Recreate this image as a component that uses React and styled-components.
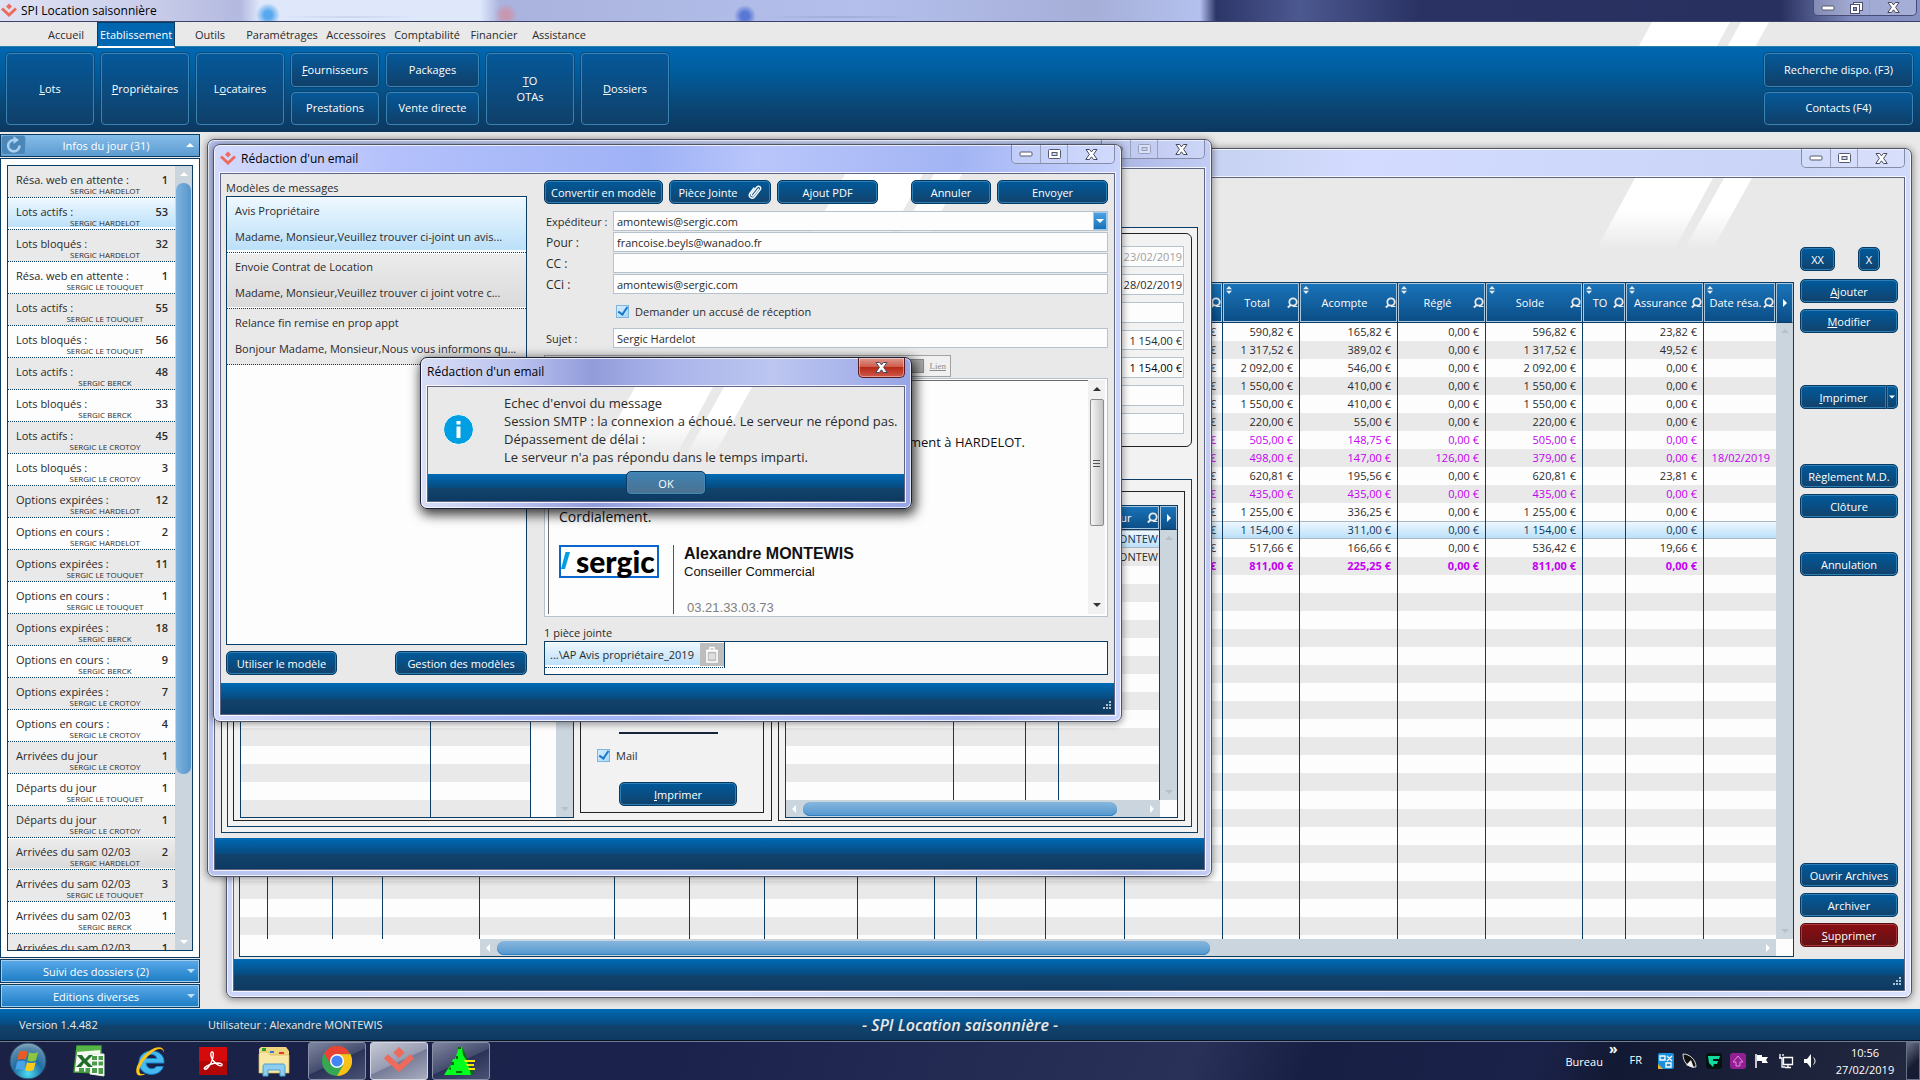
import React from 'react';
import styled, { createGlobalStyle, css } from 'styled-components';

const navy = '#0b3c64';
const sans = `'Open Sans', 'Noto Sans', sans-serif`;

const infos = [
	['Résa. web en attente :', 'SERGIC HARDELOT', 1],
	['Lots actifs :', 'SERGIC HARDELOT', 53, 'selected'],
	['Lots bloqués :', 'SERGIC HARDELOT', 32],
	['Résa. web en attente :', 'SERGIC LE TOUQUET', 1],
	['Lots actifs :', 'SERGIC LE TOUQUET', 55],
	['Lots bloqués :', 'SERGIC LE TOUQUET', 56],
	['Lots actifs :', 'SERGIC BERCK', 48],
	['Lots bloqués :', 'SERGIC BERCK', 33],
	['Lots actifs :', 'SERGIC LE CROTOY', 45],
	['Lots bloqués :', 'SERGIC LE CROTOY', 3],
	['Options expirées :', 'SERGIC HARDELOT', 12],
	['Options en cours :', 'SERGIC HARDELOT', 2],
	['Options expirées :', 'SERGIC LE TOUQUET', 11],
	['Options en cours :', 'SERGIC LE TOUQUET', 1],
	['Options expirées :', 'SERGIC BERCK', 18],
	['Options en cours :', 'SERGIC BERCK', 9],
	['Options expirées :', 'SERGIC LE CROTOY', 7],
	['Options en cours :', 'SERGIC LE CROTOY', 4],
	['Arrivées du jour', 'SERGIC LE CROTOY', 1],
	['Départs du jour', 'SERGIC LE TOUQUET', 1],
	['Départs du jour', 'SERGIC LE CROTOY', 1],
	['Arrivées du sam 02/03', 'SERGIC HARDELOT', 2, 'hover'],
	['Arrivées du sam 02/03', 'SERGIC LE TOUQUET', 3],
	['Arrivées du sam 02/03', 'SERGIC BERCK', 1],
	['Arrivées du sam 02/03', '', 1],
];

const bookingColumns = [
	{ width: 28 },
	{ width: 65 },
	{ width: 50 },
	{ width: 97 },
	{},
	{ width: 75 },
	{ width: 75 },
	{ width: 93 },
	{ width: 77 },
	{ width: 42 },
	{ width: 69 },
	{ width: 79 },
	{ width: 98, search: true },
	{ width: 77, label: 'Total', search: true },
	{ width: 98, label: 'Acompte', search: true },
	{ width: 88, label: 'Réglé', search: true },
	{ width: 97, label: 'Solde', search: true },
	{ width: 43, label: 'TO', search: true },
	{ width: 78, label: 'Assurance', search: true },
	{ width: 72, label: 'Date résa.', search: true, last: true },
];

const booking = (total, deposit, paid, due, insurance, options = {}) => ({
	cells: [...Array(12).fill(''), '€', `${total} €`, `${deposit} €`, `${paid} €`, `${due} €`, '', `${insurance} €`, options.date || ''],
	...options,
});

const bookings = [
	booking('590,82', '165,82', '0,00', '596,82', '23,82'),
	booking('1 317,52', '389,02', '0,00', '1 317,52', '49,52'),
	booking('2 092,00', '546,00', '0,00', '2 092,00', '0,00'),
	booking('1 550,00', '410,00', '0,00', '1 550,00', '0,00'),
	booking('1 550,00', '410,00', '0,00', '1 550,00', '0,00'),
	booking('220,00', '55,00', '0,00', '220,00', '0,00'),
	booking('505,00', '148,75', '0,00', '505,00', '0,00', { pink: true }),
	booking('498,00', '147,00', '126,00', '379,00', '0,00', { pink: true, date: '18/02/2019' }),
	booking('620,81', '195,56', '0,00', '620,81', '23,81'),
	booking('435,00', '435,00', '0,00', '435,00', '0,00', { pink: true }),
	booking('1 255,00', '336,25', '0,00', '1 255,00', '0,00'),
	booking('1 154,00', '311,00', '0,00', '1 154,00', '0,00', { selected: true }),
	booking('517,66', '166,66', '0,00', '536,42', '19,66'),
	booking('811,00', '225,25', '0,00', '811,00', '0,00', { pink: true, bold: true }),
];

const authorColumns = [{}, { width: 72 }, { width: 33 }, { width: 101, label: 'Utilisateur', search: true, tight: true }];
const authors = [
	{ cells: ['', '', '', 'A. MONTEW'], selected: true },
	{ cells: ['', '', '', 'A. MONTEW'] },
];

const models = [
	['Avis Propriétaire', 'Madame, Monsieur,Veuillez trouver ci-joint un avis...', 'selected'],
	['Envoie Contrat de Location', 'Madame, Monsieur,Veuillez trouver ci joint votre c...', 'hover'],
	['Relance fin remise en prop appt', 'Bonjour Madame, Monsieur,Nous vous informons qu...'],
];

/* ---------- drawings ---------- */

const SpiLogo = ({ size = 16 }) => (
	<svg width={size} height={size} viewBox="0 0 32 32" aria-hidden="true">
		<path d="M16 1l6 6-6 6-6-6z" fill="#ee6a5b" />
		<path d="M2 11l14 13 14-13" fill="none" stroke="#ee6a5b" strokeWidth="6" />
	</svg>
);

const Magnifier = () => (
	<svg width="11" height="12" viewBox="0 0 11 12" aria-hidden="true">
		<circle cx="6" cy="5" r="3.7" fill="none" stroke="#e9e9e9" strokeWidth="1.8" />
		<path d="M3.600 8L0.800 10.500" stroke="#e9e9e9" strokeWidth="2" />
		<path d="M6 9.500h4.500" stroke="#e9e9e9" strokeWidth="1" />
	</svg>
);

const SortIcon = () => (
	<svg width="6" height="8" viewBox="0 0 6 8" aria-hidden="true">
		<path d="M0 3.2L3 0l3 3.2zM0 4.8h6L3 8z" fill="#e9e9e9" />
	</svg>
);

const Triangle = ({ dir = 'down', color = '#fff', size = 8 }) => {
	const d = {
		down: 'M0 2h8L4 6z',
		up: 'M0 6h8L4 2z',
		left: 'M6 0v8L2 4z',
		right: 'M2 0v8l4-4z',
	}[dir];
	return (
		<svg width={size} height={size} viewBox="0 0 8 8" aria-hidden="true">
			<path d={d} fill={color} />
		</svg>
	);
};

const Streaks = ({ height = 72 }) => (
	<svg width="156" height={height} viewBox={`0 0 156 ${height}`} aria-hidden="true">
		<defs>
			<linearGradient id={`fade${height}`} x1="0" y1="0" x2="0" y2="72" gradientUnits="userSpaceOnUse">
				<stop offset="0.45" stopColor="#fff" />
				<stop offset="1" stopColor="#fff" stopOpacity="0" />
			</linearGradient>
		</defs>
		<path d="M39 0h78L78 72H0zM128 0h28l-40 72H88z" fill={`url(#fade${height})`} />
	</svg>
);

const Grip = () => (
	<svg width="10" height="10" viewBox="0 0 10 10" aria-hidden="true">
		<path d="M8 0h2v2H8zM5 3h2v2H5zM8 3h2v2H8zM2 6h2v2H2zM5 6h2v2H5zM8 6h2v2H8z" fill="#a9bfd2" />
	</svg>
);

const MinIcon = () => (
	<svg width="14" height="6" viewBox="0 0 14 6" aria-hidden="true">
		<rect x="1" y="1" width="12" height="4" rx="1" fill="#fff" stroke="#555a6c" />
	</svg>
);

const MaxIcon = ({ dim }) => (
	<svg width="13" height="10" viewBox="0 0 13 10" opacity={dim ? 0.4 : 1} aria-hidden="true">
		<rect x="0.5" y="0.5" width="12" height="9" rx="1" fill="#fff" stroke="#555a6c" />
		<rect x="4" y="3.5" width="5" height="3" fill="#cfd8f6" stroke="#555a6c" />
	</svg>
);

const RestoreIcon = () => (
	<svg width="13" height="12" viewBox="0 0 13 12" aria-hidden="true">
		<rect x="3.5" y="0.5" width="9" height="8" fill="#fff" stroke="#4b5070" />
		<rect x="0.5" y="2.5" width="9" height="9" fill="#fff" stroke="#4b5070" />
		<rect x="3.5" y="5.5" width="3" height="3" fill="#8791c4" stroke="#4b5070" />
	</svg>
);

const CloseIcon = () => (
	<svg width="13" height="11" viewBox="0 0 13 11" aria-hidden="true">
		<path d="M1 .5h3.6l1.9 2.4L8.400 .5H12L8.600 5.300 12.200 10.500H8.500l-2-2.700-2 2.700H.8L4.400 5.300z" fill="#fff" stroke="#454a5c" />
	</svg>
);

const Clip = () => (
	<svg width="14" height="16" viewBox="0 0 14 16" aria-hidden="true">
		<path d="M10.500 5L5.500 11.500c-1 1.300-3-.1-2-1.500l5.200-6.800c1.800-2.300 5.300 0 3.600 2.500L7 12.700c-2.600 3.400-7.500.2-5-3.500L6 4" fill="none" stroke="#fff" strokeWidth="1.400" strokeLinecap="round" />
	</svg>
);

const Trash = () => (
	<svg width="14" height="18" viewBox="0 0 14 18" aria-hidden="true">
		<path d="M1 4.500h12M5 4V1.500h4V4M2 5v11h10V5z" fill="none" stroke="#fff" strokeWidth="1.500" />
		<path d="M5 7.500v6M7 7.500v6M9 7.500v6" stroke="#fff" />
	</svg>
);

const InfoIcon = () => (
	<svg width="31" height="31" viewBox="0 0 31 31" aria-hidden="true">
		<circle cx="15.500" cy="15.500" r="15" fill="#009fe3" stroke="#f4f8fb" />
		<path d="M13.500 7h4v3.500h-4zM13.500 12.500h4V24h-4z" fill="#fff" />
	</svg>
);

const Refresh = () => (
	<svg width="16" height="18" viewBox="0 0 16 18" aria-hidden="true">
		<path d="M13.500 9.500A5.700 5.700 0 1 1 8 4" fill="none" stroke="#a9d0f0" strokeWidth="2.600" />
		<path d="M7.500 0l5.500 4-5.500 4z" fill="#a9d0f0" />
	</svg>
);

const StartOrb = () => (
	<svg width="38" height="38" viewBox="0 0 38 38" aria-hidden="true">
		<defs>
			<radialGradient id="orb" cx="0.5" cy="0.85" r="0.9">
				<stop offset="0" stopColor="#4fdcf5" />
				<stop offset="0.45" stopColor="#1f6fa5" />
				<stop offset="0.8" stopColor="#5d8cab" />
				<stop offset="1" stopColor="#9fb9c9" />
			</radialGradient>
		</defs>
		<circle cx="19" cy="19" r="18" fill="url(#orb)" stroke="#24435f" />
		<path d="M10 10c3-1.800 5.500-1.700 8.500-.3l-1.700 8.300c-3-1.300-5.600-1.300-8.500.4z" fill="#ea5a24" />
		<path d="M20 10.300c3 1.300 6 1.300 9-.3l-2 8.300c-2.800 1.500-5.500 1.500-8.600.3z" fill="#8cc63f" />
		<path d="M8 19.800c3-1.600 5.400-1.600 8.500-.3l-1.800 8.300c-3-1.300-5.500-1.200-8.300.2z" fill="#4aa3e8" />
		<path d="M18 20.200c3 1.300 5.800 1.200 8.700-.3l-2 8.200c-2.800 1.500-5.500 1.400-8.500.2z" fill="#fbc91b" />
	</svg>
);

const ExcelIcon = () => (
	<svg width="32" height="32" viewBox="0 0 32 32" aria-hidden="true">
		<path d="M4 1h24v27L1 27z" fill="#f5fbf2" stroke="#3f9a32" strokeWidth="1.500" />
		<path d="M4 1h24v4L3 7z" fill="#58b548" />
		<path d="M17 9h14v22l-14-2z" fill="#fff" stroke="#d9e8d4" />
		<path d="M19 11h5v4h-5zM25.500 11H30v4h-4.500zM19 16.500h5v4h-5zM25.500 16.500H30v4h-4.500zM6 23h5v4H6zM12.500 23H17v4h-4.500zM19 23h5v5h-5zM25.500 23H30v6h-4.500z" fill="#4a9c4a" />
		<path d="M4 10h5l3 4 4-4h4l-6 6 6 6h-5l-4-4-3 4H3l6-6z" fill="#216b2b" />
	</svg>
);

const IeIcon = () => (
	<svg width="32" height="32" viewBox="0 0 32 32" aria-hidden="true">
		<path d="M29 18H11c.4 6.500 8 7.500 10.300 3.500h6.900C25 33 4 32 4 17.500 4 2 30 2 29 18zM11.300 13.500h10.500C21 8 12.300 8 11.300 13.500z" fill="#45b9f0" stroke="#1b84cc" />
		<path d="M29 8C29.500 0 20 1 13 7 5 13.500-1 24 2 29c2 3 7 1 9-.5-3 1-6 1-6.500-1.500C3.500 22 10 13 16 8.500 21 4 28 1.500 29 8z" fill="#fbc417" />
	</svg>
);

const PdfIcon = () => (
	<svg width="28" height="28" viewBox="0 0 28 28" aria-hidden="true">
		<rect width="28" height="28" fill="#d50a0a" />
		<path d="M0 14h28v14H0z" fill="#b30606" />
		<path d="M12.500 5c3-1 2 6-.5 11-2 4-5 7-6.500 6-1.500-1.500 5-5 10-5.800 4-.7 8 .3 7.500 2-.8 2-6-1-8.500-4.200C12 11 11 6 12.500 5z" fill="none" stroke="#fff" strokeWidth="1.400" />
	</svg>
);

const FolderIcon = () => (
	<svg width="32" height="31" viewBox="0 0 32 31" aria-hidden="true">
		<path d="M1 3l2-2h25l3 4v22H1z" fill="#f0d581" />
		<path d="M4 2h4v3H4z" fill="#2aa12a" />
		<path d="M3 6h7l2 3h19v18H1V8z" fill="#f8e7a5" stroke="#d8b75a" strokeWidth="0.700" />
		<path d="M12 5h4v2h-4z" fill="#2a7ed8" />
		<path d="M21 6h5v2h-5z" fill="#d93b28" />
		<path d="M5 30V20c0-1 1-2 2-2h18c1 0 2 1 2 2v10h-5v-6H10v6z" fill="#8ccdf0" stroke="#4a9fcf" />
	</svg>
);

const ChromeIcon = () => (
	<svg width="30" height="30" viewBox="0 0 30 30" aria-hidden="true">
		<circle cx="15" cy="15" r="15" fill="#34a853" />
		<path d="M2 7.500A15 15 0 0 1 28 7.500L15 9l-6.500 9z" fill="#ea4335" />
		<path d="M28 7.500A15 15 0 0 1 15 30l6.300-11L15 8.200h13z" fill="#fbc116" />
		<circle cx="15" cy="15" r="7" fill="#fff" />
		<circle cx="15" cy="15" r="5.600" fill="#4285f4" />
	</svg>
);

const TreeIcon = () => (
	<svg width="34" height="30" viewBox="0 0 34 30" aria-hidden="true">
		<path d="M15 1l3 0 12 27h-6z" fill="#0a6b0a" />
		<path d="M15 1h3l1 8 4 6 2 7 2 7H0l5-8h1l3-8h2l2-6z" fill="#00ff1e" />
		<path d="M7 16h3v3H7zM4 23l3-2v3zM12 25h6v2h-6zM14 1h3v2h-3zM12 10h2v3h-2z" fill="#0a6b0a" />
		<path d="M20 14h11v2H21zM22 18h8v2h-7zM24 22h7v2h-6z" fill="#ffe800" />
	</svg>
);

const trayIcons = [
	<svg key="px" width="16" height="16" viewBox="0 0 16 16">
		<rect width="16" height="16" rx="2" fill="#1b8fd8" />
		<path d="M2 3h5v4H2zM9 3l5 5M14 3L9 8M8 10h5v4H8z" stroke="#fff" fill="none" strokeWidth="1.300" />
		<path d="M0 11l5 5H0z" fill="#e8b13a" />
	</svg>,
	<svg key="dish" width="16" height="16" viewBox="0 0 16 16">
		<path d="M1 1c7 0 13 6 13 13C6 15 1 9 1 1z" fill="#111" stroke="#ddd" />
		<path d="M4 12l5-5 3 8z" fill="#eee" />
	</svg>,
	<svg key="shield" width="16" height="16" viewBox="0 0 16 16">
		<rect width="16" height="16" rx="3" fill="#06120f" />
		<path d="M2 3h12l-1 3H7v2h5l-1 3H8l-1 3-4-4z" fill="#10dba0" />
	</svg>,
	<svg key="up" width="16" height="16" viewBox="0 0 16 16">
		<rect width="16" height="16" rx="3" fill="#922092" />
		<path d="M8 3l5 6h-3v4H6V9H3z" fill="none" stroke="#e58be0" />
	</svg>,
	<svg key="flag" width="16" height="16" viewBox="0 0 16 16">
		<path d="M2 1v14" stroke="#fff" strokeWidth="1.500" />
		<path d="M3 2h5v2h6l-2 3 2 3H8V8H3z" fill="#fff" />
	</svg>,
	<svg key="net" width="16" height="16" viewBox="0 0 16 16">
		<path d="M5.500 4.500h9v7h-9zM7 14.500h6M10 12v2M2 1v4M5 1v2M1 5h3v9h3" fill="none" stroke="#fff" strokeWidth="1.300" />
	</svg>,
	<svg key="sound" width="16" height="16" viewBox="0 0 16 16">
		<path d="M2 6h3l4-5v14l-4-5H2z" fill="#fff" />
		<path d="M11.500 4.500c2 2 2 5 0 7" fill="none" stroke="#fff" />
	</svg>,
];

/* ---------- shared parts ---------- */

function ScrollBar({ vertical, dim, start = 0, end = 0 }) {
	const color = dim ? '#b4c0cc' : '#fff';
	return (
		<Track $vertical={vertical}>
			<Triangle dir={vertical ? 'up' : 'left'} color={color} />
			{dim ? <Spacer /> : <Thumb $vertical={vertical} $start={start} $end={end} />}
			<Triangle dir={vertical ? 'down' : 'right'} color={color} />
		</Track>
	);
}

function DataGrid({ columns, rows, count, head }) {
	return (
		<Table>
			<colgroup>
				{columns.map((c, i) => (
					<Col key={i} $w={c.width} />
				))}
			</colgroup>
			<thead>
				<tr>
					{columns.map((c, i) => (
						<Th key={i} $h={head}>
							{head > 30 && (
								<SortMark>
									<SortIcon />
								</SortMark>
							)}
							{c.label}
							{c.search && (
								<SearchMark>
									<Magnifier />
								</SearchMark>
							)}
						</Th>
					))}
				</tr>
			</thead>
			<tbody>
				{Array.from({ length: count }, (_, r) => {
					const row = rows[r] || { cells: [] };
					return (
						<Tr key={r} $pink={row.pink} $bold={row.bold} $selected={row.selected}>
							{columns.map((c, i) => (
								<Td key={i} $last={c.last} $tight={c.tight}>
									{row.cells[i]}
								</Td>
							))}
						</Tr>
					);
				})}
			</tbody>
		</Table>
	);
}

function WindowFrame({ title, logo, controls, children, glass, strong, as: Place }) {
	return (
		<Place>
			<Frame $glass={glass} $strong={strong}>
				<TitleBar>
					{logo && <SpiLogo />}
					<TitleText>{title}</TitleText>
					{controls}
				</TitleBar>
				<Client>{children}</Client>
			</Frame>
		</Place>
	);
}

const WindowControls = ({ dim }) => (
	<Controls>
		<ControlButton $w={28} aria-label="Réduire">
			<MinIcon />
		</ControlButton>
		<ControlButton $w={27} aria-label="Agrandir">
			<MaxIcon dim={dim} />
		</ControlButton>
		<ControlButton $w={47} aria-label="Fermer">
			<CloseIcon />
		</ControlButton>
	</Controls>
);

/* ---------- windows ---------- */

function BookingsWindow() {
	return (
		<WindowFrame as={BookingsPlace} glass="linear-gradient(100deg, #c9d3f6, #d5deff 30%, #c8d2f2 55%, #d3dcfe 62%, #c9d4f6 85%, #dbe2ff)" controls={<WindowControls />}>
			<StreakLayer $right={152}>
				<Streaks />
			</StreakLayer>
			<BookingsBody>
				<BookingsGrid>
					<GridRow>
						<GridClip>
							<DataGrid columns={bookingColumns} rows={bookings} count={35} head={40} />
						</GridClip>
						<GridSide>
							<HeadMore $h={40} aria-label="Colonnes suivantes">
								<Triangle dir="right" />
							</HeadMore>
							<ScrollBar vertical dim />
						</GridSide>
					</GridRow>
					<GridBottom $indent={240}>
						<ScrollBar start={1} end={550} />
					</GridBottom>
				</BookingsGrid>
				<Actions>
					<SmallActions>
						<Button $w={35}>XX</Button>
						<Button $w={22}>X</Button>
					</SmallActions>
					<Button $mt={8}>
						<span><u>A</u>jouter</span>
					</Button>
					<Button $mt={6}>
						<span><u>M</u>odifier</span>
					</Button>
					<SplitRow>
						<Button $grow $split>
							<span><u>I</u>mprimer</span>
						</Button>
						<SplitArrow aria-label="Options d'impression">
							<Triangle size={6} />
						</SplitArrow>
					</SplitRow>
					<Button $mt={55}>Règlement M.D.</Button>
					<Button $mt={6}>Clôture</Button>
					<Button $mt={34}>Annulation</Button>
					<Spacer />
					<Button>Ouvrir Archives</Button>
					<Button $mt={6}>Archiver</Button>
					<Button $mt={6} $danger>
						<span><u>S</u>upprimer</span>
					</Button>
				</Actions>
			</BookingsBody>
			<BlueBar>
				<Grip />
			</BlueBar>
		</WindowFrame>
	);
}

function DetailWindow() {
	return (
		<WindowFrame as={DetailPlace} glass="linear-gradient(90deg, #b9c4ee, #cdd7fb 70%, #aebae6 92%, #c3cdf6)" controls={<WindowControls dim />}>
			<DetailBody>
				<Panel>
					<DatesGroup>
						<Dates>
							<AmountField $muted aria-label="Date de création" defaultValue="23/02/2019" />
							<AmountField aria-label="Date limite" defaultValue="28/02/2019" />
							<AmountField aria-label="Référence" />
							<AmountField aria-label="Montant" defaultValue="1 154,00 €" />
							<AmountField $strong aria-label="Solde" defaultValue="1 154,00 €" />
							<AmountField aria-label="Remise" />
							<AmountField aria-label="Commission" />
						</Dates>
					</DatesGroup>
					<LowerPanel>
						<LeftGroup>
							<SmallGrid>
								<GridRow>
									<GridClip>
										<DataGrid columns={[{}, { width: 100 }]} rows={[]} count={16} head={24} />
									</GridClip>
									<GridGap />
									<GridSide>
										<HeadMore $h={24} aria-label="Suite">
											<Triangle dir="right" />
										</HeadMore>
										<ScrollBar vertical dim />
									</GridSide>
								</GridRow>
							</SmallGrid>
							<PrintGroup>
								<Rule />
								<CheckLabel>
									<Check type="checkbox" defaultChecked />
									Mail
								</CheckLabel>
								<PrintButton>
									<span><u>I</u>mprimer</span>
								</PrintButton>
							</PrintGroup>
						</LeftGroup>
						<RightGroup>
							<AuthorGrid>
								<GridRow>
									<GridClip>
										<DataGrid columns={authorColumns} rows={authors} count={16} head={24} />
									</GridClip>
									<GridSide>
										<HeadMore $h={24} aria-label="Colonnes suivantes">
											<Triangle dir="right" />
										</HeadMore>
										<ScrollBar vertical dim />
									</GridSide>
								</GridRow>
								<GridBottom>
									<ScrollBar start={1} end={27} />
								</GridBottom>
							</AuthorGrid>
						</RightGroup>
					</LowerPanel>
				</Panel>
			</DetailBody>
			<BlueBar />
		</WindowFrame>
	);
}

function EmailWindow() {
	return (
		<WindowFrame as={EmailPlace} title="Rédaction d'un email" logo glass="linear-gradient(90deg, #d3dafc, #b3c0fb 20%, #9fb2f6 48%, #b9c6fb 60%, #a3b4f4 82%, #c9d4fb)" controls={<WindowControls />}>
			<StreakLayer $right={152}>
				<Streaks height={58} />
			</StreakLayer>
			<EmailBody>
				<ModelsColumn>
					<Caption>Modèles de messages</Caption>
					<ModelList>
						{models.map(([name, text, state]) => (
							<ModelItem key={name} $state={state}>
								<span>{name}</span>
								<span>{text}</span>
							</ModelItem>
						))}
					</ModelList>
					<ModelButtons>
						<Button $w={111}>Utiliser le modèle</Button>
						<Button $w={132}>Gestion des modèles</Button>
					</ModelButtons>
				</ModelsColumn>
				<MailColumn>
					<MailButtons>
						<Button $w={119}>Convertir en modèle</Button>
						<Button $w={102}>
							<WithIcon>
								Pièce Jointe
								<Clip />
							</WithIcon>
						</Button>
						<Button $w={101}>Ajout PDF</Button>
						<Spacer />
						<Button $w={80}>Annuler</Button>
						<Button $w={111}>Envoyer</Button>
					</MailButtons>
					<Fields>
						<label htmlFor="from">Expéditeur :</label>
						<SelectWrap>
							<Select id="from">
								<option>amontewis@sergic.com</option>
							</Select>
							<SelectArrow>
								<Triangle />
							</SelectArrow>
						</SelectWrap>
						<BigLabel htmlFor="to">Pour :</BigLabel>
						<Input id="to" defaultValue="francoise.beyls@wanadoo.fr" />
						<BigLabel htmlFor="cc">CC :</BigLabel>
						<Input id="cc" />
						<BigLabel htmlFor="cci">CCi :</BigLabel>
						<Input id="cci" defaultValue="amontewis@sergic.com" />
					</Fields>
					<ReceiptRow>
						<Check type="checkbox" defaultChecked />
						Demander un accusé de réception
					</ReceiptRow>
					<Fields>
						<label htmlFor="subject">Sujet :</label>
						<Input id="subject" defaultValue="Sergic Hardelot" />
					</Fields>
					<EditorTools>
						<ImageTool aria-label="Image" />
						<LinkTool>Lien</LinkTool>
					</EditorTools>
					<Editor>
						<Page>
							<Sentence>ment à HARDELOT.</Sentence>
							<Closing>Cordialement.</Closing>
							<Signature>
								<SergicLogo>
									<svg width="9" height="17" viewBox="0 0 9 17" aria-hidden="true">
										<path d="M4.500 0H9L4 17H0z" fill="#00a0e0" />
									</svg>
									sergic
								</SergicLogo>
								<Contact>
									<ContactName>Alexandre MONTEWIS</ContactName>
									<ContactRole>Conseiller Commercial</ContactRole>
									<ContactPhone>03.21.33.03.73</ContactPhone>
								</Contact>
							</Signature>
						</Page>
						<EditorScroll>
							<Triangle dir="up" color="#333" />
							<EditorThumb />
							<Spacer />
							<Triangle color="#333" />
						</EditorScroll>
					</Editor>
					<AttachCaption>1 pièce jointe</AttachCaption>
					<Attachments>
						<Attachment>
							<span>...\AP Avis propriétaire_2019</span>
							<TrashButton aria-label="Supprimer la pièce jointe">
								<Trash />
							</TrashButton>
						</Attachment>
					</Attachments>
				</MailColumn>
			</EmailBody>
			<BlueBar>
				<Grip />
			</BlueBar>
		</WindowFrame>
	);
}

function ErrorDialog() {
	return (
		<WindowFrame
			as={DialogPlace}
			title="Rédaction d'un email"
			strong
			glass="linear-gradient(90deg, #d9def6, #b9c1ee 20%, #929cda 35%, #aab4ea 50%, #bcc6f0 72%, #98a5e6)"
			controls={
				<RedClose aria-label="Fermer">
					<CloseIcon />
				</RedClose>
			}
		>
			<StreakLayer $right={152}>
				<Streaks height={70} />
			</StreakLayer>
			<DialogBody>
				<InfoIcon />
				<Message>
					Echec d'envoi du message
					<br />
					Session SMTP : la connexion a échoué. Le serveur ne répond pas.
					<br />
					Dépassement de délai :
					<br />
					Le serveur n'a pas répondu dans le temps imparti.
				</Message>
			</DialogBody>
			<DialogBar>
				<OkButton>OK</OkButton>
			</DialogBar>
		</WindowFrame>
	);
}

export default function App() {
	return (
		<Screen>
			<GlobalStyle />
			<MainTitle>
				<SpiLogo />
				<MainTitleText>SPI Location saisonnière</MainTitleText>
				<MainControls>
					<ControlButton $w={28} aria-label="Réduire">
						<MinIcon />
					</ControlButton>
					<ControlButton $w={27} aria-label="Restaurer">
						<RestoreIcon />
					</ControlButton>
					<ControlButton $w={47} aria-label="Fermer">
						<CloseIcon />
					</ControlButton>
				</MainControls>
			</MainTitle>
			<MenuBar>
				<StreakLayer $right={151}>
					<Streaks height={24} />
				</StreakLayer>
				<MenuItem $w={62}>Accueil</MenuItem>
				<MenuItem $w={78} $active>Etablissement</MenuItem>
				<MenuItem $w={70}>Outils</MenuItem>
				<MenuItem $w={74}>Paramétrages</MenuItem>
				<MenuItem $w={74}>Accessoires</MenuItem>
				<MenuItem $w={68}>Comptabilité</MenuItem>
				<MenuItem $w={66}>Financier</MenuItem>
				<MenuItem $w={64}>Assistance</MenuItem>
			</MenuBar>
			<Ribbon>
				<RibbonButton $w={88}><span><u>L</u>ots</span></RibbonButton>
				<RibbonButton $w={88}><span><u>P</u>ropriétaires</span></RibbonButton>
				<RibbonButton $w={88}><span>L<u>o</u>cataires</span></RibbonButton>
				<RibbonStack $w={88}>
					<RibbonButton><span><u>F</u>ournisseurs</span></RibbonButton>
					<RibbonButton>Prestations</RibbonButton>
				</RibbonStack>
				<RibbonStack $w={93}>
					<RibbonButton>Packages</RibbonButton>
					<RibbonButton>Vente directe</RibbonButton>
				</RibbonStack>
				<RibbonButton $w={88}>
					<span>
						<u>T</u>O
						<br />
						OTAs
					</span>
				</RibbonButton>
				<RibbonButton $w={88}><span><u>D</u>ossiers</span></RibbonButton>
				<Spacer />
				<RibbonStack $w={149}>
					<RibbonButton>Recherche dispo. (F3)</RibbonButton>
					<RibbonButton>Contacts (F4)</RibbonButton>
				</RibbonStack>
			</Ribbon>
			<Workspace>
				<Sidebar>
					<SideHead>
						<RefreshButton aria-label="Actualiser">
							<Refresh />
						</RefreshButton>
						<SideTitle>Infos du jour (31)</SideTitle>
						<Triangle dir="up" />
					</SideHead>
					<SidePanel>
						<InfoBox>
							<InfoList>
								{infos.map(([label, place, n, state], i) => (
									<InfoItem key={i} $state={state}>
										<span>{label}</span>
										<b>{n}</b>
										<small>{place}</small>
									</InfoItem>
								))}
							</InfoList>
							<ScrollBar vertical start={1} end={160} />
						</InfoBox>
					</SidePanel>
					<SideBar>
						<SideTitle>Suivi des dossiers (2)</SideTitle>
						<Triangle color="#bfe0f7" />
					</SideBar>
					<SideBar>
						<SideTitle>Editions diverses</SideTitle>
						<Triangle color="#bfe0f7" />
					</SideBar>
				</Sidebar>
				<Desktop>
					<BookingsWindow />
					<DetailWindow />
					<EmailWindow />
					<ErrorDialog />
				</Desktop>
			</Workspace>
			<StatusBar>
				<Version>Version 1.4.482</Version>
				<span>Utilisateur : Alexandre MONTEWIS</span>
				<StatusTitle>- SPI Location saisonnière -</StatusTitle>
			</StatusBar>
			<TaskBar>
				<Pinned>
					<TaskIcon aria-label="Démarrer"><StartOrb /></TaskIcon>
					<TaskIcon aria-label="Excel"><ExcelIcon /></TaskIcon>
					<TaskIcon aria-label="Internet Explorer"><IeIcon /></TaskIcon>
					<TaskIcon aria-label="Adobe Reader"><PdfIcon /></TaskIcon>
					<TaskIcon aria-label="Explorateur"><FolderIcon /></TaskIcon>
				</Pinned>
				<Running>
					<TaskButton aria-label="Chrome"><ChromeIcon /></TaskButton>
					<TaskButton $active aria-label="SPI Location saisonnière"><SpiLogo size={30} /></TaskButton>
					<TaskButton aria-label="Planning"><TreeIcon /></TaskButton>
				</Running>
				<Spacer />
				<Tray>
					<span>Bureau</span>
					<Chevrons>»</Chevrons>
					<Lang>FR</Lang>
					<TrayIcons>{trayIcons}</TrayIcons>
					<Clock>
						10:56
						<br />
						27/02/2019
					</Clock>
				</Tray>
				<ShowDesktop aria-label="Afficher le bureau" />
			</TaskBar>
		</Screen>
	);
}

/* ---------- styles ---------- */

const GlobalStyle = createGlobalStyle`
	* {
		box-sizing: border-box;
	}
	body {
		margin: 0;
		font-family: ${sans};
		font-size: 11px;
		color: #2b2b2b;
		overflow: hidden;
	}
	button, input, select {
		font: inherit;
		color: inherit;
		margin: 0;
	}
	svg {
		display: block;
		flex: none;
	}
`;

const Screen = styled.div`
	display: flex;
	flex-direction: column;
	height: 100vh;
	background: #e9e9e9;
`;

const Spacer = styled.div`
	flex: 1;
`;

const MainTitle = styled.header`
	display: flex;
	align-items: center;
	flex: none;
	height: 22px;
	padding-left: 1px;
	border-bottom: 1px solid #3a4268;
	background:
		radial-gradient(circle at 268px 15px, #58a9ee 4px, transparent 12px),
		radial-gradient(circle at 506px 15px, #c996b0 3px, transparent 12px),
		radial-gradient(circle at 745px 16px, #5878d4 4px, transparent 11px),
		radial-gradient(ellipse at 350px 17px, #c3cce6 20px, transparent 80px),
		radial-gradient(ellipse at 840px 17px, #9faad6 20px, transparent 80px),
		radial-gradient(ellipse at 1228px 15px, #a3addb 6px, transparent 15px),
		radial-gradient(ellipse at 1294px 20px, #a9b5f8 10px, transparent 24px),
		radial-gradient(ellipse at 1395px 20px, #8c98dc 8px, transparent 20px),
		radial-gradient(ellipse at 1676px 20px, #93a3ef 10px, transparent 22px),
		linear-gradient(90deg, #dfe2f3, #c9cdea 150px, #b3b9df 240px, #dfe7fb 260px, #dfe7fb 480px, #a9b3dd 500px, #b4bfec 860px, #a5afd8 1090px, #b4c0ee 1200px, #2d3668 1216px, #4c5890 1300px, #2a3263 1420px, #27305f 1780px, #7d87bb 1850px, #8791c4);
`;

const MainTitleText = styled.h1`
	margin: 0 0 0 4px;
	font-size: 12px;
	font-weight: 400;
	color: #000;
	flex: 1;
`;

const Controls = styled.div`
	display: flex;
	align-self: flex-start;
	height: 19px;
	border: 1px solid #868da6;
	border-top: 0;
	border-radius: 0 0 5px 5px;
	overflow: hidden;
`;

const MainControls = styled(Controls)`
	height: 16px;
	margin-right: 3px;
	border-color: #454c76;
`;

const ControlButton = styled.button`
	display: flex;
	align-items: center;
	justify-content: center;
	width: ${(props) => props.$w}px;
	padding: 0;
	border: 0;
	border-left: 1px solid #9aa2c0;
	background: rgba(226, 232, 255, 0.35);

	&:first-child {
		border-left: 0;
	}
`;

const MenuBar = styled.nav`
	position: relative;
	display: flex;
	flex: none;
	height: 24px;
	padding-left: 35px;
	background: #e9e9e9;
`;

const MenuItem = styled.button`
	position: relative;
	width: ${(props) => props.$w}px;
	padding: 0;
	border: 0;
	background: none;
	text-align: center;
	white-space: nowrap;

	${(props) =>
		props.$active &&
		css`
			background: #0066af;
			color: #fff;
			border: 1px solid ${navy};
			border-bottom: 2px solid #fff;
			margin-bottom: -2px;
			z-index: 1;
		`}
`;

const Ribbon = styled.section`
	display: flex;
	flex: none;
	gap: 7px;
	height: 86px;
	padding: 6px 7px 7px 6px;
	border-top: 1px solid #2e7fae;
	background: linear-gradient(#0068b1, #005c9d 30%, #0b4674 70%, #0c385f);
`;

const RibbonButton = styled.button`
	flex: ${(props) => (props.$w ? 'none' : 1)};
	width: ${(props) => (props.$w ? `${props.$w}px` : '100%')};
	padding: 0;
	border: 1px solid #3a83b3;
	border-radius: 4px;
	background: linear-gradient(#055899, #104069);
	box-shadow: 0 0 0 1px rgba(10, 60, 105, 0.6);
	color: #fff;
	line-height: 16px;
`;

const RibbonStack = styled.div`
	display: flex;
	flex-direction: column;
	flex: none;
	gap: 5px;
	width: ${(props) => props.$w}px;
`;

const Workspace = styled.div`
	display: flex;
	flex: 1;
	min-height: 0;
`;

const Sidebar = styled.aside`
	display: flex;
	flex-direction: column;
	flex: none;
	gap: 1px;
	width: 200px;
	padding: 2px 0 1px;
`;

const SideHead = styled.div`
	display: flex;
	align-items: center;
	height: 23px;
	padding: 0 5px 1px 0;
	border: 1px solid ${navy};
	background: linear-gradient(#85bde9, #5d9bd0);
	color: #fff;
`;

const RefreshButton = styled.button`
	display: grid;
	place-items: center;
	width: 25px;
	height: 20px;
	padding: 0;
	border: 1px solid #6fa6d3;
	border-radius: 3px;
	background: #4a86b8;
`;

const SideTitle = styled.span`
	flex: 1;
	text-align: center;
`;

const SidePanel = styled.div`
	display: flex;
	flex: 1;
	min-height: 0;
	padding: 6px;
	border: 1px solid ${navy};
	background: #fff;
`;

const InfoBox = styled.div`
	display: flex;
	flex: 1;
	border: 1px solid ${navy};
	overflow: hidden;
`;

const InfoList = styled.ul`
	flex: 1;
	margin: 0;
	padding: 0;
	list-style: none;
`;

const selectedFill = css`
	background: linear-gradient(#eef8ff, #b9dff9);
	box-shadow: inset 0 1px #fff, inset 0 -2px #fff;
`;

const hoverFill = css`
	background: linear-gradient(#ececec, #dadada);
	box-shadow: inset 0 1px #fff, inset 0 -1px #fff;
`;

const InfoItem = styled.li`
	display: grid;
	grid-template-columns: 1fr auto;
	grid-template-rows: 13px 9px;
	height: 32px;
	padding: 7px 7px 0 8px;
	border-bottom: 1px dotted ${navy};
	background: #fdfdfd;
	line-height: 13px;

	&:nth-child(odd) {
		background: #e9e9e9;
	}

	b {
		font-weight: 600;
	}

	small {
		grid-column: 1 / 3;
		padding-left: 26px;
		font-size: 8px;
		line-height: 9px;
		text-align: center;
	}

	&& {
		${(props) => props.$state === 'selected' && selectedFill}
		${(props) => props.$state === 'hover' && hoverFill}
	}
`;

const SideBar = styled.button`
	display: flex;
	align-items: center;
	height: 24px;
	padding: 0 4px;
	border: 1px solid ${navy};
	box-shadow: inset 0 0 0 1px #a5cdec;
	background: linear-gradient(#5aaae9, #1c7cc4);
	color: #fff;
`;

const Track = styled.div`
	display: flex;
	flex: ${(props) => (props.$vertical ? 'none' : 1)};
	flex-direction: ${(props) => (props.$vertical ? 'column' : 'row')};
	align-items: center;
	gap: 4px;
	width: ${(props) => (props.$vertical ? '17px' : 'auto')};
	height: ${(props) => (props.$vertical ? 'auto' : '17px')};
	padding: 4px;
	background: #cbd5de;
`;

const Thumb = styled.div`
	flex: 1;
	border-radius: 7px;
	${(props) =>
		props.$vertical
			? css`
					width: 15px;
					margin: ${props.$start}px 0 ${props.$end}px;
					background: linear-gradient(90deg, #7fb3dd, #5796cb);
			  `
			: css`
					height: 14px;
					margin: 0 ${props.$end}px 0 ${props.$start}px;
					background: linear-gradient(#86b6dd, #5497cf);
					box-shadow: inset 0 -1px #2d7fc2;
			  `}
`;

const Desktop = styled.main`
	position: relative;
	flex: 1;
`;

/* window positions on the desktop */
const BookingsPlace = styled.section`
	position: absolute;
	inset: 16px 8px 11px 26px;
`;

const DetailPlace = styled.section`
	position: absolute;
	top: 7px;
	left: 7px;
	width: 1005px;
	height: 738px;
`;

const EmailPlace = styled.section`
	position: absolute;
	top: 12px;
	left: 13px;
	width: 909px;
	height: 578px;
`;

const DialogPlace = styled.section`
	position: absolute;
	top: 225px;
	left: 220px;
	width: 492px;
	height: 152px;
`;

const Frame = styled.div`
	display: flex;
	flex-direction: column;
	height: 100%;
	padding: 0 6px 6px;
	border: 1px solid ${(props) => (props.$strong ? '#1c2038' : '#4f5468')};
	border-radius: 7px;
	background: ${(props) => props.$glass};
	box-shadow:
		inset 0 0 0 1px rgba(255, 255, 255, 0.75),
		${(props) => (props.$strong ? '2px 4px 12px 2px rgba(0, 0, 0, 0.75)' : '0 1px 7px 1px rgba(0, 0, 0, 0.4)')};
`;

const TitleBar = styled.div`
	display: flex;
	align-items: center;
	flex: none;
	gap: 5px;
	height: 28px;
`;

const TitleText = styled.h2`
	flex: 1;
	margin: 0;
	font-size: 12px;
	font-weight: 400;
	line-height: 16px;
	padding-bottom: 1px;
	color: #000;
`;

const Client = styled.div`
	position: relative;
	display: flex;
	flex: 1;
	flex-direction: column;
	min-height: 0;
	border: 1px solid #5f6580;
	box-shadow: 0 0 0 1px rgba(255, 255, 255, 0.8);
	background: #e9e9e9;
`;

const StreakLayer = styled.div`
	position: absolute;
	top: 0;
	right: ${(props) => props.$right}px;
`;

const BlueBar = styled.div`
	display: flex;
	align-items: flex-end;
	justify-content: flex-end;
	flex: none;
	height: 31px;
	padding: 3px;
	background: linear-gradient(#006ab5, #074b80 50%, #12426a 54%, #0d3a62);
`;

const Button = styled.button`
	display: flex;
	align-items: center;
	justify-content: center;
	flex: ${(props) => (props.$grow ? 1 : 'none')};
	width: ${(props) => (props.$w ? `${props.$w}px` : 'auto')};
	height: 24px;
	margin-top: ${(props) => props.$mt || 0}px;
	padding: 0;
	border: 1px solid ${(props) => (props.$danger ? '#5c0d12' : '#093a63')};
	border-radius: ${(props) => (props.$split ? '5px 0 0 5px' : '5px')};
	background: ${(props) => (props.$danger ? 'linear-gradient(#8c0d11, #611216)' : 'linear-gradient(#005a9c, #12426b)')};
	box-shadow: inset 0 0 0 1px ${(props) => (props.$danger ? '#a53a3e' : '#2d7eb2')};
	color: #fff;
	white-space: nowrap;
`;

const GridRow = styled.div`
	display: flex;
	flex: 1;
	min-height: 0;
`;

const GridClip = styled.div`
	flex: 1;
	overflow: hidden;
`;

const GridGap = styled.div`
	width: 25px;
	background: #fdfdfd;
`;

const GridSide = styled.div`
	display: flex;
	flex-direction: column;
	width: 17px;

	> :last-child {
		flex: 1;
	}
`;

const HeadMore = styled.button`
	display: grid;
	place-items: center;
	flex: none;
	height: ${(props) => props.$h}px;
	padding: 0;
	border: 1px solid #a8c6de;
	border-bottom: 1px solid ${navy};
	background: linear-gradient(#1a74ba, #0b4d86);
`;

const GridBottom = styled.div`
	display: flex;
	flex: none;
	padding: 0 17px 0 ${(props) => props.$indent || 0}px;
	background: #fdfdfd;
`;

const Table = styled.table`
	width: 100%;
	table-layout: fixed;
	border-collapse: separate;
	border-spacing: 0;
`;

const Col = styled.col`
	width: ${(props) => (props.$w ? `${props.$w}px` : 'auto')};
`;

const Th = styled.th`
	position: relative;
	height: ${(props) => props.$h}px;
	padding: 0 8px 0 0;
	border-right: 1px solid ${navy};
	border-bottom: 1px solid ${navy};
	background: linear-gradient(#1a74ba, #0b4d86);
	box-shadow: inset 0 0 0 1px #a8c6de;
	color: #fff;
	font-weight: 400;
	white-space: nowrap;
`;

const SortMark = styled.span`
	position: absolute;
	top: 3px;
	left: 3px;
`;

const SearchMark = styled.span`
	position: absolute;
	right: 1px;
	top: 50%;
	margin-top: -6px;
`;

const Td = styled.td`
	height: 18px;
	padding: 0 ${(props) => (props.$tight ? 1 : 6)}px 0 0;
	border-right: ${(props) => (props.$last ? 0 : `1px solid ${navy}`)};
	line-height: 16px;
	text-align: right;
	white-space: nowrap;
	overflow: hidden;
`;

const Tr = styled.tr`
	background: #fdfdfd;
	color: ${(props) => (props.$pink ? '#c400f0' : 'inherit')};
	font-weight: ${(props) => (props.$bold ? 700 : 400)};

	&:nth-child(even) {
		background: #e9e9e9;
	}

	&& {
		${(props) =>
			props.$selected &&
			css`
				background: linear-gradient(#f0f9ff, #b9dff9);
				box-shadow: inset 0 1px #a9b7c2, inset 0 -1px #a9b7c2;
				color: #0f3557;
			`}
	}
`;

const BookingsBody = styled.div`
	position: relative;
	display: flex;
	flex: 1;
	gap: 6px;
	min-height: 0;
	padding: 0 6px 2px 5px;
`;

const BookingsGrid = styled.div`
	display: flex;
	flex: 1;
	flex-direction: column;
	min-width: 0;
	margin-top: 104px;
	border: 1px solid ${navy};
`;

const Actions = styled.div`
	display: flex;
	flex: none;
	flex-direction: column;
	width: 98px;
	padding: 69px 0 10px;
`;

const SmallActions = styled.div`
	display: flex;
	gap: 23px;
`;

const SplitRow = styled.div`
	display: flex;
	margin-top: 52px;
`;

const SplitArrow = styled.button`
	display: grid;
	place-items: center;
	width: 11px;
	padding: 0;
	border: 1px solid #093a63;
	border-left: 0;
	border-radius: 0 5px 5px 0;
	background: linear-gradient(#005a9c, #12426b);
	box-shadow: inset 0 0 0 1px #2d7eb2;
`;

const DetailBody = styled.div`
	display: flex;
	flex: 1;
	min-height: 0;
	padding: 58px 6px 5px;
`;

const Panel = styled.div`
	display: flex;
	flex: 1;
	flex-direction: column;
	gap: 32px;
	padding: 5px;
	border: 1px solid ${navy};
	background: #f2f2f2;
`;

const DatesGroup = styled.div`
	display: flex;
	justify-content: flex-end;
	flex: none;
	height: 214px;
	padding: 12px 7px;
	border: 1px solid #222;
	border-radius: 6px;
`;

const Dates = styled.div`
	display: flex;
	flex-direction: column;
	gap: 7px;
	width: 120px;
`;

const Input = styled.input`
	width: 100%;
	height: 20px;
	padding: 0 3px;
	border: 1px solid #b4c3ce;
	border-radius: 0;
	background: #fdfdfd;
	outline: 0;
`;

const AmountField = styled(Input)`
	height: 21px;
	padding: 0 1px;
	text-align: right;
	color: ${(props) => (props.$muted ? '#a0a0a0' : props.$strong ? '#000' : '#2b2b2b')};
`;

const LowerPanel = styled.div`
	display: flex;
	flex: 1;
	gap: 6px;
	min-height: 0;
	padding: 11px 6px 5px 5px;
	border: 1px solid ${navy};
`;

const LeftGroup = styled.div`
	display: flex;
	flex: none;
	gap: 6px;
	width: 539px;
	padding: 13px 7px 2px 6px;
	border: 1px solid #222;
`;

const RightGroup = styled.div`
	display: flex;
	flex: 1;
	padding: 13px 6px 2px;
	border: 1px solid #222;
`;

const SmallGrid = styled.div`
	display: flex;
	flex: none;
	width: 334px;
	border: 1px solid ${navy};
`;

const AuthorGrid = styled.div`
	display: flex;
	flex: 1;
	flex-direction: column;
	border: 1px solid ${navy};
`;

const PrintGroup = styled.div`
	display: flex;
	flex: 1;
	flex-direction: column;
	justify-content: flex-end;
	margin-bottom: 5px;
	padding: 0 26px 6px 16px;
	border: 1px solid #222;
`;

const Rule = styled.hr`
	width: 99px;
	height: 2px;
	margin: 0 0 14px 22px;
	border: 0;
	background: #16243a;
`;

const CheckLabel = styled.label`
	display: flex;
	align-items: center;
	gap: 6px;
	height: 14px;
`;

const Check = styled.input`
	display: grid;
	place-items: center;
	appearance: none;
	width: 13px;
	height: 13px;
	border: 1px solid #7fb5dd;
	background: linear-gradient(135deg, #d5edfd, #a7d8f9);

	&:checked::after {
		content: '';
		width: 4px;
		height: 8px;
		margin-top: -2px;
		border: solid #1877c9;
		border-width: 0 2px 2px 0;
		transform: rotate(35deg);
	}
`;

const PrintButton = styled(Button)`
	margin: 20px 0 0 22px;
`;

const EmailBody = styled.div`
	position: relative;
	display: flex;
	flex: 1;
	gap: 17px;
	min-height: 0;
	padding: 6px 6px 8px 5px;
`;

const ModelsColumn = styled.div`
	display: flex;
	flex: none;
	flex-direction: column;
	width: 301px;
`;

const Caption = styled.div`
	height: 16px;
	line-height: 16px;
`;

const ModelList = styled.ul`
	flex: 1;
	margin: 0 0 6px;
	padding: 0;
	border: 1px solid ${navy};
	background: #fdfdfd;
	list-style: none;
`;

const ModelItem = styled.li`
	display: flex;
	flex-direction: column;
	gap: 10px;
	height: 56px;
	padding: 6px 8px;
	border-bottom: 1px dotted ${navy};
	background: #e9e9e9;
	line-height: 16px;
	white-space: nowrap;
	${(props) => props.$state === 'selected' && selectedFill}
	${(props) => props.$state === 'hover' && hoverFill}
`;

const ModelButtons = styled.div`
	display: flex;
	justify-content: space-between;
`;

const MailColumn = styled.div`
	display: flex;
	flex: 1;
	flex-direction: column;
	min-width: 0;
`;

const MailButtons = styled.div`
	display: flex;
	gap: 6px;
	margin-bottom: 7px;
`;

const WithIcon = styled.span`
	display: flex;
	align-items: center;
	gap: 10px;
`;

const Fields = styled.div`
	display: grid;
	grid-template-columns: 67px 1fr;
	align-items: center;
	row-gap: 1px;
	padding-left: 2px;
`;

const BigLabel = styled.label`
	font-size: 12px;
`;

const SelectWrap = styled.div`
	position: relative;
	height: 20px;
`;

const Select = styled.select`
	width: 100%;
	height: 20px;
	padding: 0 3px;
	border: 1px solid #b4c3ce;
	border-radius: 0;
	background: #fdfdfd;
	appearance: none;
`;

const SelectArrow = styled.span`
	position: absolute;
	top: 1px;
	right: 1px;
	display: grid;
	place-items: center;
	width: 14px;
	height: 18px;
	border: 1px solid #9dc8ea;
	background: linear-gradient(#4da2e4, #1871b8);
	pointer-events: none;
`;

const ReceiptRow = styled(CheckLabel)`
	margin: 10px 0 10px 72px;
`;

const EditorTools = styled.div`
	display: flex;
	align-items: center;
	justify-content: flex-end;
	gap: 6px;
	width: 407px;
	height: 22px;
	margin: 7px 0 1px;
	padding-right: 4px;
	border: 1px solid #a2a2a2;
	background: #f0f0f0;
`;

const ImageTool = styled.button`
	width: 17px;
	height: 14px;
	border: 1px solid #8a8a8a;
	background: #a8a8a8;
`;

const LinkTool = styled.button`
	padding: 0;
	border: 0;
	background: none;
	font-family: 'Liberation Serif', serif;
	font-size: 9px;
	color: #8a8a8a;
	text-decoration: underline;
`;

const Editor = styled.div`
	display: flex;
	flex: 1;
	min-height: 0;
	padding: 1px 2px 2px 3px;
	border: 1px solid #b4c3ce;
	background: #fdfdfd;
`;

const Page = styled.div`
	flex: 1;
	border-top: 1px solid #6c6c6c;
	border-left: 1px solid #6c6c6c;
	padding: 52px 0 0 10px;
	overflow: hidden;
	color: #111;
`;

const Sentence = styled.p`
	margin: 0 0 57px;
	padding-left: 350px;
	font-size: 13px;
	line-height: 18px;
`;

const Closing = styled.p`
	margin: 0 0 19px;
	font-size: 14px;
	line-height: 18px;
`;

const Signature = styled.div`
	display: flex;
	align-items: flex-start;
	gap: 14px;
	font-family: 'Liberation Sans', sans-serif;
`;

const SergicLogo = styled.div`
	display: flex;
	align-items: center;
	gap: 6px;
	width: 100px;
	height: 33px;
	padding: 0 0 2px;
	border: 2px solid #0a66cc;
	background: #fff;
	font-family: Lato, sans-serif;
	font-size: 30px;
	font-weight: 900;
	line-height: 20px;
	color: #000;

	svg {
		margin-bottom: 1px;
	}
`;

const Contact = styled.div`
	height: 80px;
	padding-left: 10px;
	border-left: 1px solid #555;
`;

const ContactName = styled.div`
	font-size: 16px;
	font-weight: 700;
	line-height: 18px;
`;

const ContactRole = styled.div`
	font-size: 13px;
	line-height: 18px;
`;

const ContactPhone = styled.div`
	margin-top: 18px;
	padding-left: 3px;
	font-size: 13px;
	line-height: 18px;
	color: #808080;
`;

const EditorScroll = styled.div`
	display: flex;
	flex: none;
	flex-direction: column;
	align-items: center;
	width: 17px;
	padding: 5px 0;
	background: #f1f1f1;
`;

const EditorThumb = styled.div`
	width: 14px;
	height: 127px;
	margin-top: 6px;
	border: 1px solid #8c8c8c;
	border-radius: 2px;
	background:
		linear-gradient(#555 1px, transparent 1px 3px, #555 3px 4px, transparent 4px 6px, #555 6px 7px, transparent 7px) center 60px / 7px 8px no-repeat,
		linear-gradient(90deg, #f5f5f5, #c4c4c4);
`;

const AttachCaption = styled.div`
	flex: none;
	height: 24px;
	padding-top: 8px;
	line-height: 15px;
`;

const Attachments = styled.div`
	flex: none;
	height: 34px;
	border: 1px solid ${navy};
	background: #fdfdfd;
`;

const Attachment = styled.div`
	display: flex;
	align-items: center;
	justify-content: space-between;
	width: 180px;
	height: 26px;
	padding-left: 5px;
	border-right: 1px solid ${navy};
	border-bottom: 1px dotted ${navy};
	line-height: 16px;
	white-space: nowrap;
	${selectedFill}
`;

const TrashButton = styled.button`
	display: grid;
	place-items: center;
	width: 24px;
	height: 23px;
	padding: 0;
	border: 0;
	background: #bdbdbd;
`;

const RedClose = styled.button`
	display: grid;
	place-items: center;
	align-self: flex-start;
	width: 47px;
	height: 20px;
	padding: 0;
	border: 1px solid #5a1c20;
	border-top: 0;
	border-radius: 0 0 5px 5px;
	background: linear-gradient(#dd9a90, #cf5d4d 45%, #b82a16 50%, #d0584a);
	box-shadow: inset 0 0 0 1px rgba(255, 255, 255, 0.4);
`;

const DialogBody = styled.div`
	position: relative;
	display: flex;
	align-items: center;
	flex: 1;
	gap: 30px;
	padding: 0 0 2px 15px;
`;

const Message = styled.p`
	margin: 0;
	font-size: 13px;
	line-height: 18px;
	white-space: nowrap;
`;

const DialogBar = styled(BlueBar)`
	position: relative;
	align-items: flex-start;
	justify-content: center;
	height: 27px;
	padding: 0;
`;

const OkButton = styled(Button)`
	width: 80px;
	margin-top: -3px;
	background: linear-gradient(#4083b5, #4c7190);
	box-shadow: inset 0 0 0 1px #4488b4;
`;

const StatusBar = styled.footer`
	display: grid;
	grid-template-columns: 189px 1fr auto 1fr 189px;
	align-items: center;
	flex: none;
	height: 32px;
	padding: 0 19px;
	border-bottom: 1px solid #06121f;
	background: linear-gradient(#006ab5, #074b80 50%, #12426a 54%, #0d3a62);
	color: #e9e9e9;
`;

const Version = styled.span`
	white-space: nowrap;
`;

const StatusTitle = styled.strong`
	font-size: 16px;
	font-style: italic;
	font-weight: 600;
`;

const TaskBar = styled.nav`
	display: flex;
	align-items: center;
	flex: none;
	height: 39px;
	border-top: 1px solid #6f7c97;
	background: linear-gradient(110deg, #1a2145, #1b234d 35%, #2a3158 62%, #181f45 68%, #1b2249 80%, #121932 84%, #232940);
	color: #fff;
`;

const Pinned = styled.div`
	display: flex;
	width: 308px;
`;

const TaskIcon = styled.button`
	display: grid;
	place-items: center;
	flex: 1;
	height: 38px;
	padding: 0 6px 0 0;
	border: 0;
	background: none;
`;

const Running = styled.div`
	display: flex;
	gap: 4px;
`;

const TaskButton = styled.button`
	display: grid;
	place-items: center;
	width: 58px;
	height: 38px;
	padding: 0;
	border: 1px solid ${(props) => (props.$active ? '#d5d8e2' : '#8990a8')};
	border-radius: 3px;
	background: ${(props) =>
		props.$active ? 'linear-gradient(155deg, #c5c8d4, #979cb2 50%, #767c98 52%, #a9adbf)' : 'linear-gradient(155deg, #7f869f, #454d70 50%, #2b3358 52%, #4a5274)'};
`;

const Tray = styled.div`
	display: flex;
	align-items: center;
	height: 38px;
`;

const Chevrons = styled.span`
	height: 38px;
	margin-left: 6px;
	font-size: 14px;
	line-height: 14px;
	font-weight: 700;
`;

const Lang = styled.span`
	margin: 0 16px 4px 12px;
`;

const TrayIcons = styled.div`
	display: flex;
	gap: 8px;
`;

const Clock = styled.time`
	width: 88px;
	padding-left: 6px;
	font-size: 11px;
	line-height: 17px;
	text-align: center;
`;

const ShowDesktop = styled.button`
	width: 14px;
	height: 38px;
	padding: 0;
	border: 1px solid #667089;
	background: linear-gradient(135deg, #6b7186, #171c33 60%);
`;
